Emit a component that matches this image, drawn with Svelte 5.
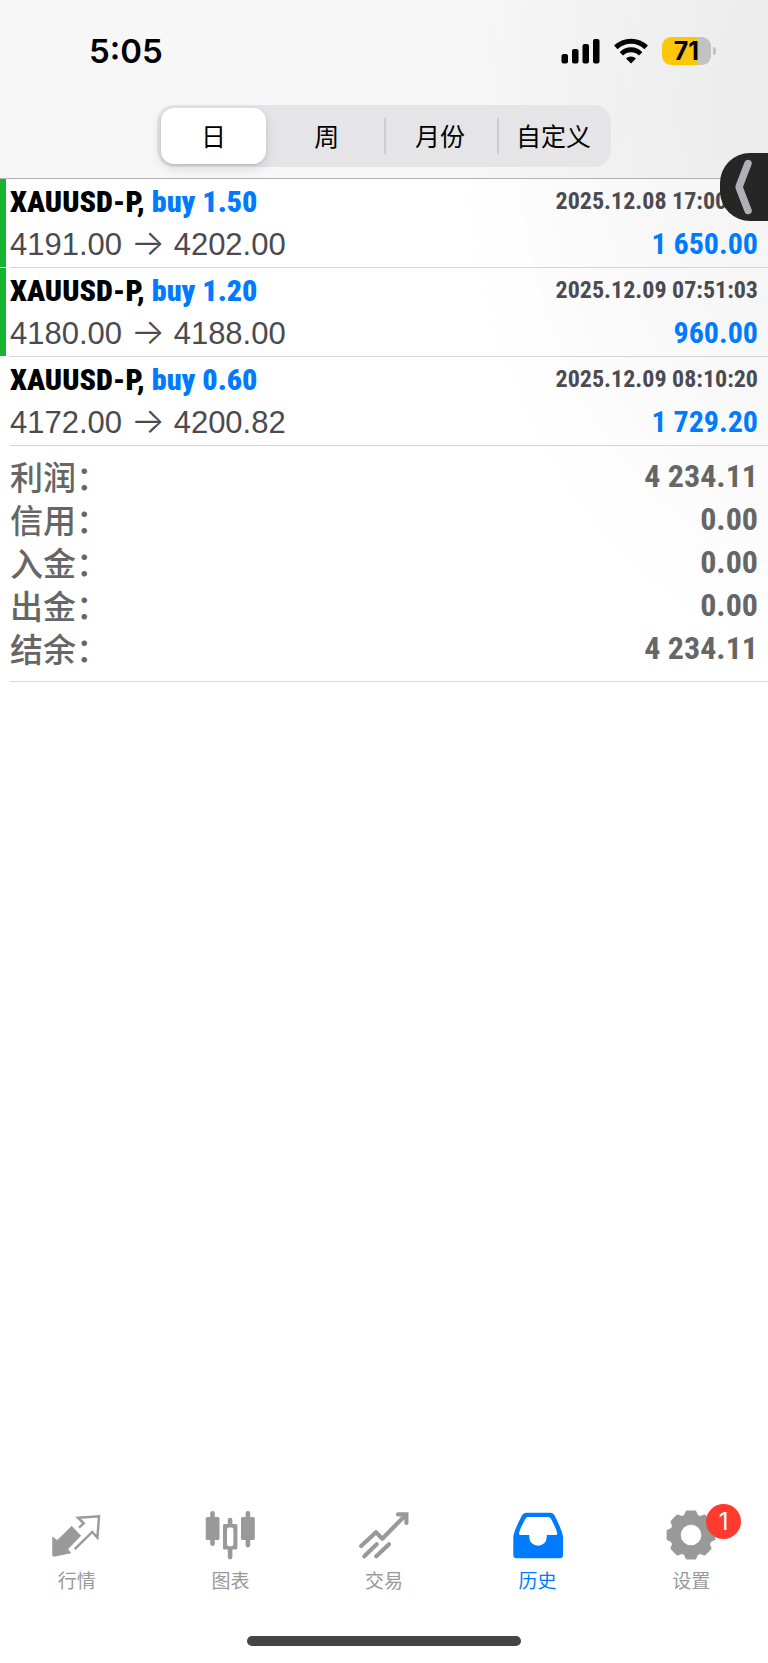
<script>
  const periods = ['日', '周', '月份', '自定义'];
  let selected = $state('日');

  const deals = [
    { symbol: 'XAUUSD-P', side: 'buy 1.50', open: '4191.00', close: '4202.00', time: '2025.12.08 17:00:00', profit: '1 650.00', marked: true },
    { symbol: 'XAUUSD-P', side: 'buy 1.20', open: '4180.00', close: '4188.00', time: '2025.12.09 07:51:03', profit: '960.00', marked: true },
    { symbol: 'XAUUSD-P', side: 'buy 0.60', open: '4172.00', close: '4200.82', time: '2025.12.09 08:10:20', profit: '1 729.20', marked: false }
  ];

  const totals = [
    ['利润：', '4 234.11'],
    ['信用：', '0.00'],
    ['入金：', '0.00'],
    ['出金：', '0.00'],
    ['结余：', '4 234.11']
  ];

  // Outline of the eight-toothed settings gear, centred on 26,26.
  const gear = Array.from({ length: 8 }, (_, i) =>
    [[-16, 20.5], [-10, 23.5], [10, 23.5], [16, 20.5], [22.5, 19.5]].map(([a, r]) => {
      const t = ((i * 45 + a - 90) * Math.PI) / 180;
      return `${(26 + r * Math.cos(t)).toFixed(2)},${(26 + r * Math.sin(t)).toFixed(2)}`;
    }).join(' ')
  ).join(' ');
</script>

<div class="page">
  <header>
    <div class="status">
      <time>5:05</time>
      <div class="indicators">
        <svg width="39" height="26" viewBox="0 0 39 26" aria-hidden="true">
          <rect x="0.5" y="16" width="6.5" height="9.5" rx="2" />
          <rect x="11" y="11" width="6.5" height="14.5" rx="2" />
          <rect x="21.5" y="6" width="6.5" height="19.5" rx="2" />
          <rect x="32" y="1" width="6.5" height="24.5" rx="2" />
        </svg>
        <svg width="34" height="26" viewBox="0 0 34 26" aria-hidden="true">
          <path d="M1.8 9.400a21.6 21.6 0 0 1 30.4 0" fill="none" stroke="#000" stroke-width="5" />
          <path d="M7.400 15.800a13.4 13.4 0 0 1 19.200 0" fill="none" stroke="#000" stroke-width="4.800" />
          <path d="M17 25.5l-5-5a7.2 7.2 0 0 1 10 0z" />
        </svg>
        <div class="battery"><span>71</span></div>
      </div>
    </div>
    <div class="segments">
      {#each periods as p}
        <button class:active={selected === p} onclick={() => (selected = p)}><span>{p}</span></button>
      {/each}
    </div>
  </header>

  <main>
    <ul>
      {#each deals as d}
        <li class:marked={d.marked}>
          <div class="deal">
            <div class="line">
              <strong>{d.symbol}, <span class="blue">{d.side}</span></strong>
              <time>{d.time}</time>
            </div>
            <div class="line">
              <span class="prices">{d.open} <span class="arrow">→</span> {d.close}</span>
              <span class="profit">{d.profit}</span>
            </div>
          </div>
        </li>
      {/each}
    </ul>
    <dl>
      {#each totals as [label, value]}
        <div><dt>{label}</dt><dd>{value}</dd></div>
      {/each}
    </dl>
  </main>

  <nav>
    <a href="#quotes">
      <svg viewBox="0 0 52 52" aria-hidden="true">
        <path d="M1.7 28.2l4.5 3.2L20.7 17.3l9 9.4-13 13.4 3 3.8L3 47.3q-1.3 0-1.3-1.3z" fill="currentColor" stroke="currentColor" stroke-width="0.8" stroke-linejoin="round" />
        <path d="M28 18.7l4.7-4.4L27 8.7 48 7.4l-1.6 21.3-5.1-5.7L23.7 40.2" fill="none" stroke="currentColor" stroke-width="2.4" />
      </svg>
      行情
    </a>
    <a href="#charts">
      <svg viewBox="0 0 52 52" aria-hidden="true">
        <g fill="currentColor">
          <rect x="1.7" y="8" width="13.8" height="23" rx="1.5" />
          <rect x="6.2" y="2" width="4.6" height="35" rx="2.3" />
          <rect x="37" y="8" width="13.8" height="23" rx="1.5" />
          <rect x="41.6" y="2" width="4.6" height="36.4" rx="2.3" />
          <path fill-rule="evenodd" d="M20.5 15h11.4q1.5 0 1.5 1.5v22.4q0 1.5-1.5 1.5H20.5q-1.5 0-1.5-1.5V16.5q0-1.5 1.5-1.5zM25 18.6q-2 0-2 2v14.6q0 2 2 2h2.4q2 0 2-2V20.6q0-2-2-2z" />
          <path d="M23.8 16v-5a2.3 2.3 0 0 1 4.6 0v5zM23.8 39.5v8.6a2.3 2.3 0 0 0 4.6 0v-8.6z" />
        </g>
      </svg>
      图表
    </a>
    <a href="#trade">
      <svg viewBox="0 0 52 52" fill="none" stroke="currentColor" stroke-width="4.2" stroke-linecap="round" aria-hidden="true">
        <path d="M3.2 37L18 23.3l6.3 6.4L47.5 6.2" stroke-linejoin="round" />
        <path d="M40 5.4h8.4V14" />
        <path d="M18.7 35.3L6.3 47.3M31 35.3L18.3 47.3" />
      </svg>
      交易
    </a>
    <a href="#history" class="current">
      <svg viewBox="0 0 52 52" aria-hidden="true">
        <path fill="currentColor" fill-rule="evenodd" d="M14 3.7h24.5q2.8 0 4 2.5 8.5 17 8.5 22V46q0 3.3-3.3 3.3H4.6Q1.3 49.3 1.3 46V28.2q0-5 8.7-22 1.2-2.5 4-2.5zM16 8q-1.6 0-2.3 1.5-5.5 9.5-6.7 14.5-.4 2 1.500 2h8.800v2.200a8.700 8.500 0 0 0 17.400 0V26h9q1.900 0 1.500-2-1.200-5-6.400-14.500Q38 8 36.400 8z" />
      </svg>
      历史
    </a>
    <a href="#settings">
      <span class="icon">
        <svg viewBox="0 0 52 52" aria-hidden="true">
          <polygon points={gear} fill="currentColor" stroke="currentColor" stroke-width="2.5" stroke-linejoin="round" />
          <circle cx="26" cy="26" r="10.3" fill="#fff" />
        </svg>
        <span class="badge">1</span>
      </span>
      设置
    </a>
  </nav>
  <div class="home"></div>

  <button class="handle" aria-label="展开">
    <svg width="20" height="58" viewBox="0 0 20 58" aria-hidden="true">
      <path d="M14 5.500L5 29l9 23.500" fill="none" stroke="#b1b0b8" stroke-width="7.500" stroke-linecap="round" stroke-linejoin="bevel" />
    </svg>
  </button>
</div>

<style>
  :global(body) { margin: 0; background: #fff; }
  * { box-sizing: border-box; }
  button { border: 0; padding: 0; background: none; font: inherit; color: inherit; }
  .page {
    position: relative;
    min-height: 100vh;
    display: flex;
    flex-direction: column;
    background: radial-gradient(ellipse 380px 560px at 108% 110px, rgba(0, 0, 0, 0.05), rgba(0, 0, 0, 0.03) 45%, transparent);
    font-family: "Liberation Sans", "Noto Sans CJK SC", sans-serif;
  }
  header {
    display: flex;
    flex-direction: column;
    align-items: center;
    padding: 32px 0 11px;
    background: rgba(0, 0, 0, 0.033);
    border-bottom: 1px solid #b2b2b4;
  }
  .status {
    width: 100%;
    display: flex;
    justify-content: space-between;
    align-items: center;
    height: 38px;
    padding: 0 57px 0 89px;
    font-family: Inter, sans-serif;
  }
  .status time { font-size: 33px; font-weight: 600; }
  .indicators { display: flex; align-items: center; gap: 14px; }
  .battery {
    position: relative;
    width: 49px;
    height: 28px;
    border-radius: 9px;
    background: linear-gradient(90deg, #fcc60a 72%, #c2c2c2 72%);
    font-size: 25px;
    font-weight: 700;
    line-height: 28px;
    text-align: center;
  }
  .battery::after {
    content: "";
    position: absolute;
    left: 51px;
    top: 10px;
    width: 3px;
    height: 8px;
    border-radius: 0 4px 4px 0;
    background: #c2c2c2;
  }
  .segments {
    width: 59%;
    height: 62px;
    margin-top: 35px;
    display: grid;
    grid-template-columns: repeat(4, 1fr);
    align-items: center;
    border-radius: 17px;
    background: #e5e5e8;
    font-family: "Noto Sans CJK SC", sans-serif;
    font-size: 25px;
  }
  .segments button { height: 56px; padding: 0 5px 0 4px; }
  .segments button span {
    display: flex;
    height: 100%;
    padding-bottom: 3px;
    align-items: center;
    justify-content: center;
  }
  .segments button:nth-child(n + 3) {
    background: linear-gradient(#cdcdd0, #cdcdd0) left center / 2px 36px no-repeat;
  }
  .segments .active span {
    border-radius: 13px;
    background: #fff;
    box-shadow: 0 4px 12px rgba(0, 0, 0, 0.13), 0 1px 2px rgba(0, 0, 0, 0.12);
  }
  ul { list-style: none; margin: 0; padding: 0; }
  li { border-left: 6px solid transparent; padding-left: 4px; margin-bottom: 1px; }
  li.marked { border-left-color: #16b52f; }
  .deal { position: relative; height: 88px; padding: 1px 10px 0 0; }
  .deal::after {
    content: "";
    position: absolute;
    inset: auto 0 -1px;
    height: 1px;
    background: #d4d4d6;
  }
  .line {
    display: flex;
    justify-content: space-between;
    align-items: center;
    height: 42px;
    font-family: "Roboto Condensed", "Liberation Sans Narrow", Roboto, sans-serif;
    font-weight: 700;
    white-space: nowrap;
  }
  strong { font-size: 30px; }
  .line time { font-size: 24px; color: #4b4a51; }
  .blue, .profit { color: #007aff; }
  .profit { font-size: 30px; }
  .prices { font: 31px/36px "Liberation Sans", sans-serif; color: #4b4a51; }
  .arrow { font: 300 36px/36px Inter, sans-serif; }
  dl {
    margin: 0 0 0 10px;
    padding: 9px 10px 11px 0;
    border-bottom: 1px solid #dadadc;
    color: #666;
  }
  dl div { display: flex; justify-content: space-between; align-items: center; height: 43px; }
  dt { font: 500 33px/43px "Noto Sans CJK SC", sans-serif; }
  dd { margin: 0; font: 700 32px/43px "Roboto Condensed", "Liberation Sans Narrow", Roboto, sans-serif; }
  nav {
    margin-top: auto;
    display: grid;
    grid-template-columns: repeat(5, 1fr);
    font-family: "Noto Sans CJK SC", sans-serif;
    font-size: 19px;
    line-height: 28px;
  }
  nav a {
    display: flex;
    flex-direction: column;
    align-items: center;
    gap: 5px;
    color: #999;
    text-decoration: none;
  }
  nav svg { display: block; width: 52px; height: 52px; }
  nav .current { color: #007aff; }
  .icon { position: relative; }
  .badge {
    position: absolute;
    left: 41px;
    top: -5px;
    width: 35px;
    height: 35px;
    border-radius: 50%;
    background: #ff3b30;
    color: #fff;
    font: 24px/35px Inter, sans-serif;
    text-align: center;
  }
  .home {
    width: 36%;
    max-width: 274px;
    height: 10px;
    margin: 42px auto 17px;
    border-radius: 5px;
    background: #444;
  }
  .handle {
    position: absolute;
    right: 0;
    top: 153px;
    width: 48px;
    height: 68px;
    padding-left: 14px;
    display: flex;
    align-items: center;
    border-radius: 30px 0 0 30px;
    background: #262626;
  }
</style>
